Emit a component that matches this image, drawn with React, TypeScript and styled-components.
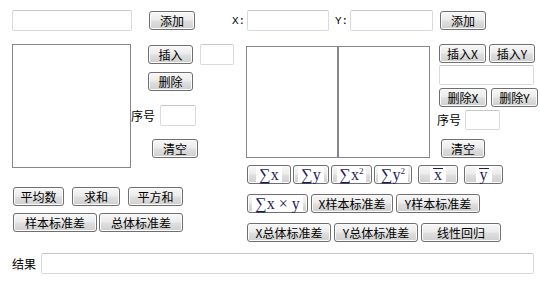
import { createGlobalStyle, styled } from 'styled-components';

const GlobalStyle = createGlobalStyle`
  html, body {
    margin: 0;
    padding: 0;
    background: #fff;
  }
  body {
    font-family: "Noto Sans CJK SC", "DejaVu Sans", sans-serif;
    font-size: 12px;
    color: #000;
  }
`;

export default function App() {
  return (
    <Page>
      <GlobalStyle />
      <Columns>
        <LeftCol>
          <TopRow>
            <TextBox $w={120} />
            <Btn $w={46} style={{ marginLeft: 17 }}>添加</Btn>
          </TopRow>
          <ListRow>
            <ListBox $w={119} $h={124} />
            <Side>
              <SideRow $indent={17}>
                <Btn $w={45}>插入</Btn>
                <TextBox $w={34} style={{ marginLeft: 7 }} />
              </SideRow>
              <SideRow $indent={17} $top={7}>
                <Btn $w={45}>删除</Btn>
              </SideRow>
              <SideRow $top={14}>
                <Label>序号</Label>
                <TextBox $w={36} style={{ marginLeft: 5 }} />
              </SideRow>
              <SideRow $indent={21} $top={13}>
                <Btn $w={46}>清空</Btn>
              </SideRow>
            </Side>
          </ListRow>
          <BtnRow $top={19} $gap={8}>
            <Btn $w={51}>平均数</Btn>
            <Btn $w={48}>求和</Btn>
            <Btn $w={55}>平方和</Btn>
          </BtnRow>
          <BtnRow $top={7} $gap={2}>
            <Btn $w={84}>样本标准差</Btn>
            <Btn $w={84}>总体标准差</Btn>
          </BtnRow>
        </LeftCol>

        <RightCol>
          <TopRow>
            <AxisLabel>X:</AxisLabel>
            <TextBox $w={82} />
            <AxisLabel style={{ marginLeft: 6 }}>Y:</AxisLabel>
            <TextBox $w={83} />
            <Btn $w={46} style={{ marginLeft: 7 }}>添加</Btn>
          </TopRow>
          <ListRow>
            <Lists>
              <ListBox $w={92} $h={112} />
              <ListBox $w={92} $h={112} />
            </Lists>
            <Side style={{ marginLeft: 7 }}>
              <SideRow $indent={2} $gap={3}>
                <Btn $w={47}>插入X</Btn>
                <Btn $w={46}>插入Y</Btn>
              </SideRow>
              <SideRow $indent={2} $top={2}>
                <TextBox $w={95} $h={20} />
              </SideRow>
              <SideRow $indent={2} $top={3} $gap={4}>
                <Btn $w={48}>删除X</Btn>
                <Btn $w={47}>删除Y</Btn>
              </SideRow>
              <SideRow $top={3}>
                <Label>序号</Label>
                <TextBox $w={35} $h={20} style={{ marginLeft: 4 }} />
              </SideRow>
              <SideRow $indent={4} $top={9}>
                <Btn $w={44}>清空</Btn>
              </SideRow>
            </Side>
          </ListRow>
          <BtnRow $top={7} $gap={2} $indent={15}>
            <Btn $w={44}><Formula>∑x</Formula></Btn>
            <Btn $w={36}><Formula>∑y</Formula></Btn>
            <Btn $w={41}><Formula>∑x<sup>2</sup></Formula></Btn>
            <Btn $w={38}><Formula>∑y<sup>2</sup></Formula></Btn>
            <Btn $w={40} style={{ marginLeft: 4 }}><Formula><Bar>x</Bar></Formula></Btn>
            <Btn $w={39} style={{ marginLeft: 4 }}><Formula><Bar>y</Bar></Formula></Btn>
          </BtnRow>
          <BtnRow $top={10} $gap={3} $indent={15}>
            <Btn $w={61}><Formula>∑x × y</Formula></Btn>
            <Btn $w={82}>X样本标准差</Btn>
            <Btn $w={84}>Y样本标准差</Btn>
          </BtnRow>
          <BtnRow $top={10} $gap={3} $indent={15}>
            <Btn $w={84}>X总体标准差</Btn>
            <Btn $w={84}>Y总体标准差</Btn>
            <Btn $w={80}>线性回归</Btn>
          </BtnRow>
        </RightCol>
      </Columns>

      <ResultRow>
        <Label>结果</Label>
        <TextBox $w={493} style={{ marginLeft: 5 }} />
      </ResultRow>
    </Page>
  );
}

const Page = styled.div`
  width: 540px;
  padding-top: 10px;
`;

const Columns = styled.div`
  display: flex;
  align-items: flex-start;
`;

const LeftCol = styled.div`
  width: 220px;
  padding-left: 12px;
  display: flex;
  flex-direction: column;
`;

const RightCol = styled.div`
  display: flex;
  flex-direction: column;
`;

const TopRow = styled.div`
  display: flex;
  align-items: center;
  height: 21px;
`;

const ListRow = styled.div`
  display: flex;
  align-items: flex-start;
  margin-top: 13px;
`;

const Lists = styled.div`
  display: flex;
  margin-left: 14px;
  margin-top: 2px;
`;

const Side = styled.div`
  display: flex;
  flex-direction: column;
`;

const SideRow = styled.div<{ $indent?: number; $top?: number; $gap?: number }>`
  display: flex;
  align-items: center;
  padding-left: ${(p) => p.$indent ?? 0}px;
  margin-top: ${(p) => p.$top ?? 0}px;
  gap: ${(p) => p.$gap ?? 0}px;
`;

const BtnRow = styled.div<{ $top: number; $gap: number; $indent?: number }>`
  display: flex;
  align-items: center;
  margin-top: ${(p) => p.$top}px;
  gap: ${(p) => p.$gap}px;
  padding-left: ${(p) => p.$indent ?? 1}px;
`;

const ResultRow = styled.div`
  display: flex;
  align-items: center;
  margin-top: 11px;
  padding-left: 12px;
`;

const Label = styled.span`
  font-size: 12px;
  line-height: 20px;
  white-space: nowrap;
`;

const AxisLabel = styled.span`
  font-family: "Liberation Mono", monospace;
  font-size: 11px;
  width: 15px;
  white-space: nowrap;
`;

const TextBox = styled.div<{ $w: number; $h?: number }>`
  box-sizing: border-box;
  width: ${(p) => p.$w}px;
  height: ${(p) => p.$h ?? 21}px;
  flex: none;
  background: #fff;
  border: 1px solid #d7dbe0;
  border-top-color: #c3c7cd;
  border-radius: 2px;
`;

const ListBox = styled.div<{ $w: number; $h: number }>`
  box-sizing: border-box;
  width: ${(p) => p.$w}px;
  height: ${(p) => p.$h}px;
  flex: none;
  background: #fff;
  border: 1px solid #84878f;
`;

const Btn = styled.button<{ $w: number }>`
  box-sizing: border-box;
  width: ${(p) => p.$w}px;
  height: 19px;
  flex: none;
  padding: 0;
  margin: 0;
  display: flex;
  align-items: center;
  justify-content: center;
  font-family: "Noto Sans CJK SC", "DejaVu Sans", sans-serif;
  font-size: 12px;
  line-height: 1;
  color: #000;
  border: 1px solid #6f6f6f;
  border-radius: 3px;
  background: linear-gradient(#f7f7f7 0%, #ececec 45%, #dedede 55%, #cfcfcf 100%);
  box-shadow: inset 0 0 0 1px #fbfbfb;
  white-space: nowrap;
`;

const Formula = styled.span`
  display: inline-flex;
  align-items: center;
  height: 15px;
  padding: 0 3px;
  background: #fff;
  font-family: "Liberation Serif", "DejaVu Serif", serif;
  font-size: 16px;
  color: #1c1c5c;
  sup {
    font-size: 9px;
    align-self: flex-start;
    line-height: 9px;
  }
`;

const Bar = styled.span`
  display: inline-block;
  border-top: 1px solid #1c1c5c;
  line-height: 12px;
  padding: 0 1px;
`;
